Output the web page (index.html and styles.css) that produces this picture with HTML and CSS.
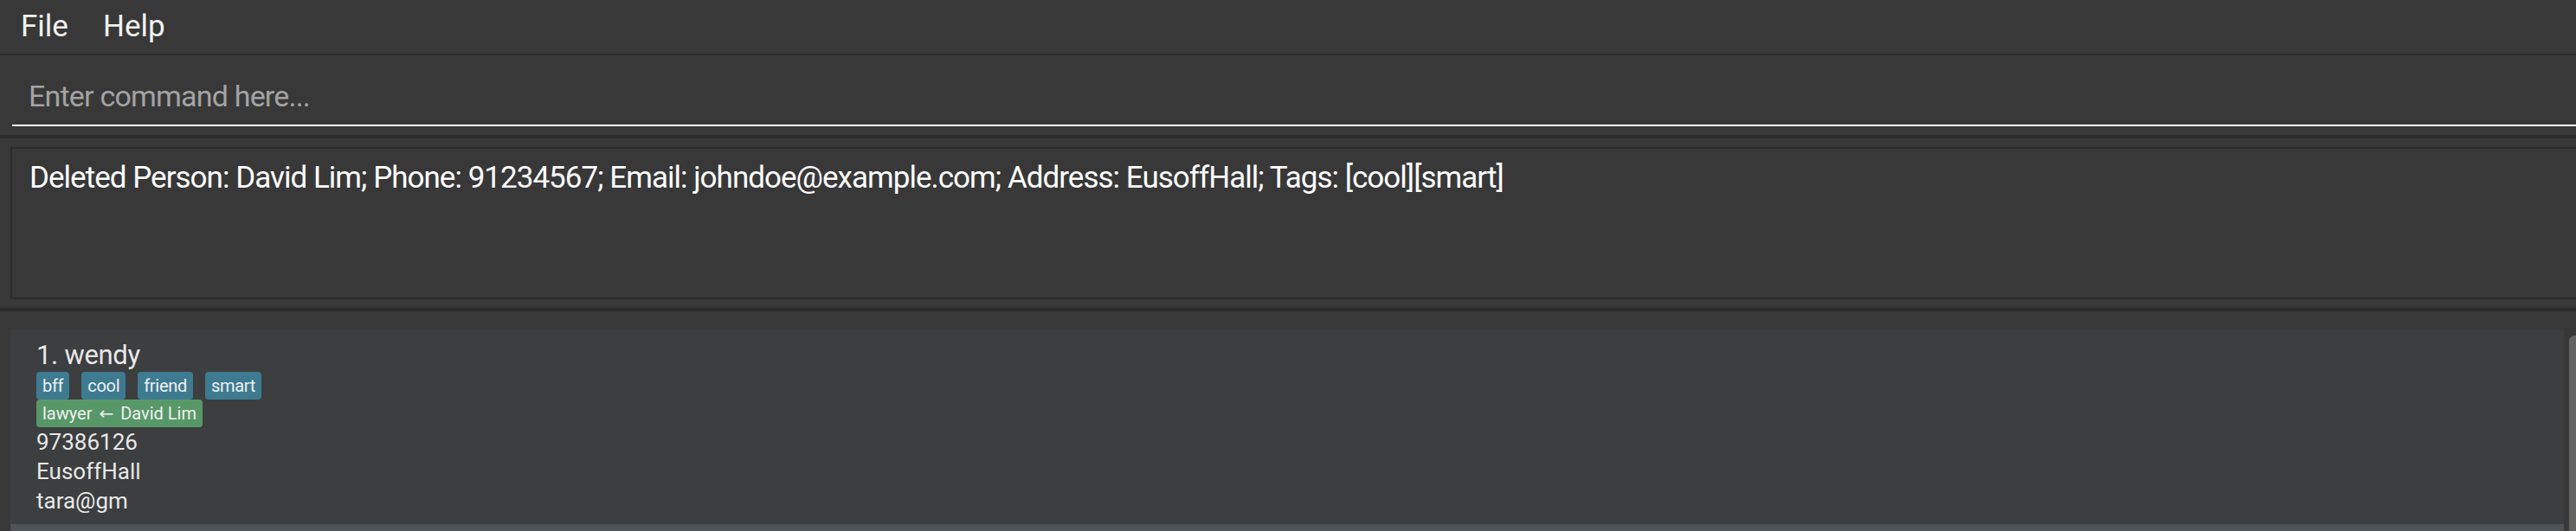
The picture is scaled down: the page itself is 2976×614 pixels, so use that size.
FILE: index.html
```html
<!DOCTYPE html>
<html lang="en">
<head>
<meta charset="utf-8">
<title>Address App</title>
<link rel="stylesheet" href="styles.css">
</head>
<body>
<div class="app">
  <div class="menubar">
    <span class="menu-item">File</span>
    <span class="menu-item">Help</span>
  </div>
  <div class="command-pane">
    <input class="command-input" type="text" placeholder="Enter command here...">
  </div>
  <div class="result-pane">
    <div class="result-box">Deleted Person: David Lim; Phone: 91234567; Email: johndoe@example.com; Address: EusoffHall; Tags: [cool][smart]</div>
  </div>
  <div class="list-pane">
    <div class="list">
      <div class="card">
        <div class="card-name">1. wendy</div>
        <div class="tag-row">
          <span class="tag">bff</span>
          <span class="tag">cool</span>
          <span class="tag">friend</span>
          <span class="tag">smart</span>
        </div>
        <div class="tag-row">
          <span class="tag tag-relation">lawyer <span class="arrow">←</span> David Lim</span>
        </div>
        <div class="card-line">97386126</div>
        <div class="card-line">EusoffHall</div>
        <div class="card-line">tara@gm</div>
      </div>
      <div class="card card-odd"></div>
    </div>
    <div class="scrollbar"><div class="thumb"></div></div>
  </div>
</div>
</body>
</html>
```

FILE: styles.css
```css
html, body {
  margin: 0;
  padding: 0;
  height: 614px;
  overflow: hidden;
  background: #383838;
}

.app {
  width: 100%;
  height: 614px;
  overflow: hidden;
  font-family: Roboto, "Liberation Sans", sans-serif;
  background: #383838;
}

.menubar {
  display: flex;
  height: 62px;
  padding-left: 4px;
  border-bottom: 2px solid #2b2b2b;
}

.menu-item {
  padding: 0 20px;
  font-size: 35px;
  line-height: 62px;
  letter-spacing: 0;
  color: #f2f2f2;
}

.command-pane {
  padding: 13px 0 10px 14px;
  border-bottom: 4px solid #2b2b2b;
  height: 69px;
}

.command-input {
  display: block;
  width: 100%;
  height: 69px;
  box-sizing: border-box;
  margin: 0;
  padding: 0 0 0 19px;
  border: none;
  border-bottom: 2px solid #ffffff;
  background: transparent;
  outline: none;
  font-family: Roboto, "Liberation Sans", sans-serif;
  font-size: 34px;
  letter-spacing: -0.8px;
  color: #ffffff;
}

.command-input::placeholder {
  color: #a3a3a3;
  opacity: 1;
}

.result-pane {
  padding: 10px 0 10px 12px;
  border-bottom: 4px solid #2b2b2b;
}

.result-box {
  height: 176px;
  box-sizing: border-box;
  margin-right: -6px;
  padding: 13px 0 0 20px;
  border: 2px solid #2b2b2b;
  font-size: 35px;
  line-height: 42px;
  letter-spacing: -0.98px;
  color: #ffffff;
  white-space: nowrap;
}

.list-pane {
  display: flex;
  gap: 6px;
  padding: 20px 0 0 12px;
}

.list {
  flex: 1;
  display: flex;
  flex-direction: column;
}

.card {
  padding: 12px 0 10px 30px;
  background: #3c3e40;
  color: #e8e8e8;
}

.card-odd {
  height: 60px;
  padding: 0;
  background: #4d5356;
}

.card-name {
  font-size: 31px;
  line-height: 38px;
  letter-spacing: -0.3px;
}

.tag-row {
  display: flex;
  gap: 14px;
  height: 32px;
}

.tag {
  height: 32px;
  padding: 0 7px;
  border-radius: 4px;
  background: #3e7b91;
  color: #f0f0f0;
  font-size: 20px;
  line-height: 32px;
  letter-spacing: -0.3px;
}

.tag-relation {
  background: #589868;
  letter-spacing: 0;
}

.arrow {
  margin: 0 3px;
  font-family: "DejaVu Sans", sans-serif;
  font-size: 20px;
}

.card-line {
  font-size: 26px;
  line-height: 34px;
}

.scrollbar {
  width: 8px;
  padding-top: 8px;
}

.thumb {
  width: 12px;
  height: 300px;
  border-radius: 6px 0 0 0;
  background: #636363;
}
```
